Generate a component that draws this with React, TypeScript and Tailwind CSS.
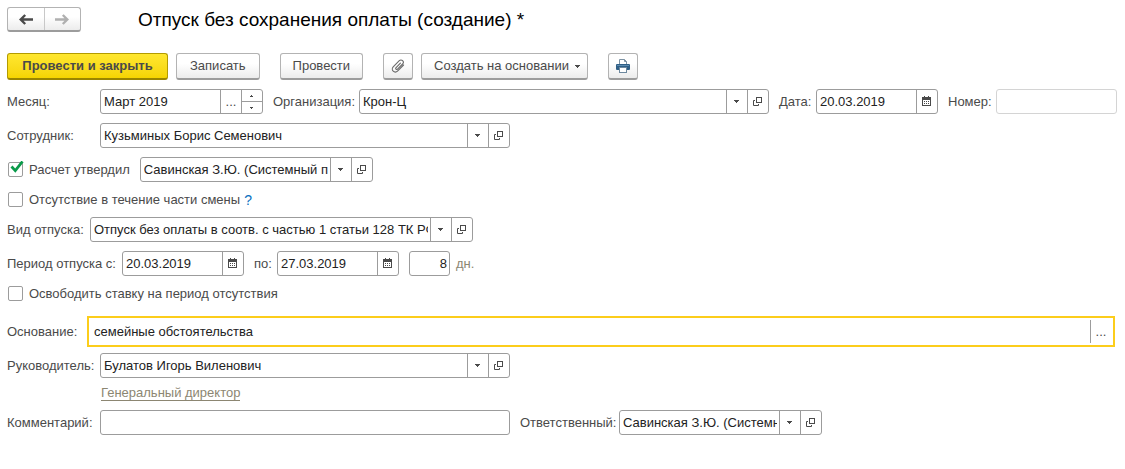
import { useState, type ReactNode } from "react";
import clsx from "clsx";

const OpenIcon = () => (
    <svg width="10" height="9" viewBox="0 0 10 9" fill="none" stroke="#4a4a4a" aria-hidden="true">
        <rect x="3.5" y="0.5" width="5" height="5" />
        <path d="M2 3.5H0.5V8.5H5.5V7" />
    </svg>
)

const CalendarIcon = () => (
    <svg width="10" height="11" viewBox="0 0 10 11" fill="#4a4a4a" shapeRendering="crispEdges" aria-hidden="true">
        <path d="M2 0h1v1h3V0h1v1h2v9H0V1h2zM1 4v5h7V4z" fillRule="evenodd" />
        <path d="M2 5h1v1H2zM4 5h1v1H4zM6 5h1v1H6zM2 7h1v1H2zM4 7h1v1H4zM6 7h1v1H6z" />
    </svg>
)

const CaretIcon = () => (
    <svg width="6" height="3" viewBox="0 0 6 3" fill="#4a4a4a" shapeRendering="crispEdges" aria-hidden="true">
        <path d="M0 0h5v1H4v1H3v1H2V2H1V1H0z" />
    </svg>
)

const ArrowIcon = ({ className }: { className: string }) => (
    <svg width="14" height="11" viewBox="0 0 14 11" fill="none" stroke="currentColor" strokeWidth="2.4" className={className} aria-hidden="true">
        <path d="M14 5.5H2M6.2 1L1.7 5.5L6.2 10" />
    </svg>
)

const ClipIcon = () => (
    <svg width="14" height="14" viewBox="0 0 14 14" fill="none" stroke="#6a6a6a" strokeWidth="1.1" strokeLinecap="round" aria-hidden="true">
        <path d="M9.4 4.2L4.9 8.9a1 1 0 0 0 1.4 1.4L11.6 5a2.3 2.3 0 0 0-3.3-3.3L2.2 7.9a3 3 0 0 0 4.3 4.3L12.6 6" />
    </svg>
)

const PrinterIcon = () => (
    <svg width="14" height="14" viewBox="0 0 14 14" aria-hidden="true">
        <path d="M3.5 5V0.5h5l2 2V5" fill="#fff" stroke="#7d92a3" />
        <path d="M8.5 0.5v2h2" fill="none" stroke="#7d92a3" />
        <rect x="0" y="5" width="14" height="6" rx="1" fill="#2f5f86" />
        <rect x="1" y="6" width="12" height="1" fill="#5d8bb0" />
        <rect x="3.5" y="8.5" width="7" height="5" fill="#fff" stroke="#6d889e" />
    </svg>
)

interface ToolButtonProps {
    children: ReactNode;
    className?: string;
    label?: string;
}

const ToolButton = ({ children, className, label }: ToolButtonProps) => (
    <button
        type="button"
        aria-label={label}
        className={clsx(
            "flex h-[27px] shrink-0 items-center justify-center rounded-[3px] border border-b-2 whitespace-nowrap",
            className ?? "border-[#b3b3b3] border-b-[#9c9c9c] bg-linear-to-b from-white from-40% to-[#ececec]"
        )}
    >
        {children}
    </button>
)

interface FieldProps {
    id: string;
    label: string;
    value?: string;
    labelWidth?: string;
    width: string;
    buttons?: ("caret" | "open" | "calendar" | "more" | "spin")[];
    disabled?: boolean;
    right?: boolean;
    hideLabel?: boolean;
}

const names = { caret: "Выбрать", open: "Открыть", calendar: "Календарь", more: "Выбрать из списка" };

const Field = ({ id, label, value = "", labelWidth, width, buttons = [], disabled, right, hideLabel }: FieldProps) => {
    const [text, setText] = useState(value);

    return (
        <div className={clsx("flex items-center", width === "flex-1" && "min-w-0 flex-1")}>
            {!hideLabel && (
                <label htmlFor={id} className={clsx("shrink-0 whitespace-nowrap", labelWidth)}>{label}</label>
            )}
            <div className={clsx("flex h-[25px] min-w-0 rounded-[3px] border bg-white", width, disabled ? "border-[#d4d4d4]" : "border-[#9c9c9c]")}>
                <input
                    id={id}
                    aria-label={hideLabel ? label : undefined}
                    value={text}
                    disabled={disabled}
                    onChange={(e) => setText(e.target.value)}
                    className={clsx("w-0 min-w-0 flex-1 pr-0.5 pl-[3px] text-[#222] outline-none", right && "text-right")}
                />
                {buttons.map((b) => b === "spin" ? (
                    <div key={b} className="flex w-[21px] shrink-0 flex-col border-l border-[#9c9c9c]">
                        <button type="button" aria-label="Больше" className="flex flex-1 items-center justify-center border-b border-[#9c9c9c]">
                            <svg width="4" height="2" viewBox="0 0 4 2" fill="#4a4a4a" shapeRendering="crispEdges"><path d="M1 0h1v1h1v1H0V1h1z" /></svg>
                        </button>
                        <button type="button" aria-label="Меньше" className="flex flex-1 items-center justify-center">
                            <svg width="4" height="2" viewBox="0 0 4 2" fill="#4a4a4a" shapeRendering="crispEdges"><path d="M0 0h3v1H2v1H1V1H0z" /></svg>
                        </button>
                    </div>
                ) : (
                    <button key={b} type="button" aria-label={names[b]} className="flex w-[21px] shrink-0 items-center justify-center border-l border-[#9c9c9c]">
                        {b === "caret" && <CaretIcon />}
                        {b === "open" && <OpenIcon />}
                        {b === "calendar" && <CalendarIcon />}
                        {b === "more" && "..."}
                    </button>
                ))}
            </div>
        </div>
    )
}

const Check = ({ id, label, initial = false }: { id: string; label: string; initial?: boolean }) => {
    const [on, setOn] = useState(initial);

    return (
        <div className="flex items-center pl-px">
            <span className="relative flex">
                <input
                    id={id}
                    type="checkbox"
                    checked={on}
                    onChange={() => setOn(!on)}
                    className="size-[15px] appearance-none rounded-[2px] border border-[#9c9c9c] bg-white"
                />
                {on && (
                    <svg width="15" height="14" viewBox="0 0 15 14" fill="none" stroke="#0a9a4a" strokeWidth="2.8" className="pointer-events-none absolute -top-px left-0.5" aria-hidden="true">
                        <path d="M1.5 5.5L5.3 9.6L12.5 0.5" />
                    </svg>
                )}
            </span>
            <label htmlFor={id} className="pl-1.5 whitespace-nowrap">{label}</label>
        </div>
    )
}

const App = () => {
    const [reason, setReason] = useState("семейные обстоятельства");

    return (
        <main className="bg-white py-[7px] pr-2 pl-[7px] font-['Liberation_Sans',Arial,sans-serif] text-[13px] leading-4 text-[#4a4a4a]">
            <header className="flex items-center gap-[57px]">
                <div className="flex h-[25px] w-[74px] rounded-[3px] border border-b-2 border-[#b3b3b3] border-b-[#9c9c9c] bg-linear-to-b from-white from-40% to-[#ececec]">
                    <button type="button" aria-label="Назад" className="flex flex-1 items-center justify-center border-r border-[#c8c8c8]">
                        <ArrowIcon className="text-[#4a4a4a]" />
                    </button>
                    <button type="button" aria-label="Вперед" className="flex flex-1 items-center justify-center">
                        <ArrowIcon className="rotate-180 text-[#b0b0b0]" />
                    </button>
                </div>
                <h1 className="text-[19px] leading-6 text-black">Отпуск без сохранения оплаты (создание) *</h1>
            </header>

            <div className="mt-[21px] flex gap-5">
                <div className="flex gap-2">
                    <ToolButton className="w-[161px] border-[#b39b00] border-b-[#9a8500] bg-linear-to-b from-[#ffe72e] to-[#f5d400] font-bold">Провести и закрыть</ToolButton>
                    <ToolButton><span className="px-[13px]">Записать</span></ToolButton>
                </div>
                <ToolButton><span className="px-3">Провести</span></ToolButton>
                <div className="flex gap-2">
                    <ToolButton label="Присоединенные файлы"><span className="px-[7px]"><ClipIcon /></span></ToolButton>
                    <ToolButton><span className="flex items-center gap-1.5 pr-1.5 pl-3">Создать на основании <CaretIcon /></span></ToolButton>
                </div>
                <ToolButton label="Печать"><span className="px-[7px]"><PrinterIcon /></span></ToolButton>
            </div>

            <div className="mt-[9px] flex flex-col gap-[9px]">
                <div className="flex gap-2.5">
                    <Field id="month" label="Месяц:" value="Март 2019" labelWidth="w-[93px]" width="w-[163px]" buttons={["more", "spin"]} />
                    <Field id="org" label="Организация:" value="Крон-Ц" labelWidth="w-[86px]" width="flex-1" buttons={["caret", "open"]} />
                    <Field id="date" label="Дата:" value="20.03.2019" labelWidth="w-[37px]" width="w-[122px]" buttons={["calendar"]} />
                    <Field id="number" label="Номер:" labelWidth="w-12" width="w-[121px]" disabled />
                </div>
                <Field id="employee" label="Сотрудник:" value="Кузьминых Борис Семенович" labelWidth="w-[93px]" width="w-[410px]" buttons={["caret", "open"]} />
                <div className="flex gap-2.5">
                    <Check id="approved" label="Расчет утвердил" initial />
                    <Field id="approver" label="Расчет утвердил" hideLabel value="Савинская З.Ю. (Системный программист)" width="w-[233px]" buttons={["caret", "open"]} />
                </div>
                <div className="flex h-[17px] items-center gap-1">
                    <Check id="partial" label="Отсутствие в течение части смены" />
                    <button type="button" className="text-sm text-[#0a70c0]">?</button>
                </div>
                <Field id="kind" label="Вид отпуска:" value="Отпуск без оплаты в соотв. с частью 1 статьи 128 ТК РФ" labelWidth="w-[83px]" width="w-[383px]" buttons={["caret", "open"]} />
                <div className="flex items-center gap-2.5">
                    <Field id="from" label="Период отпуска с:" value="20.03.2019" labelWidth="w-[115px]" width="w-[122px]" buttons={["calendar"]} />
                    <Field id="to" label="по:" value="27.03.2019" labelWidth="w-[23px]" width="w-[122px]" buttons={["calendar"]} />
                    <div className="flex items-center gap-1.5">
                        <Field id="days" label="Дней" hideLabel value="8" width="w-[41px]" right />
                        <span className="text-[#8c8672]">дн.</span>
                    </div>
                </div>
                <div className="flex h-[17px] items-center">
                    <Check id="release" label="Освободить ставку на период отсутствия" />
                </div>
            </div>

            <div className="mt-3.5 flex items-center pr-0.5">
                <label htmlFor="reason" className="w-20 shrink-0">Основание:</label>
                <div className="flex h-[31px] min-w-0 flex-1 items-center border-2 border-[#fccd1b] pr-0.5">
                    <input
                        id="reason"
                        value={reason}
                        onChange={(e) => setReason(e.target.value)}
                        className="min-w-0 flex-1 pl-[5px] text-[#222] outline-none"
                    />
                    <button type="button" aria-label="Выбрать основание" className="h-[23px] w-[21px] shrink-0 border-l border-[#9c9c9c]">...</button>
                </div>
            </div>

            <div className="mt-1.5 flex flex-col gap-[9px]">
                <Field id="manager" label="Руководитель:" value="Булатов Игорь Виленович" labelWidth="w-[93px]" width="w-[410px]" buttons={["caret", "open"]} />
                <a href="#" className="ml-[94px] h-3.5 self-start border-b border-[#8c8672] leading-3 text-[#8c8672]">Генеральный директор</a>
                <div className="flex gap-2.5">
                    <Field id="comment" label="Комментарий:" labelWidth="w-[93px]" width="w-[410px]" />
                    <Field id="responsible" label="Ответственный:" value="Савинская З.Ю. (Системный программист)" labelWidth="w-[99px]" width="w-[203px]" buttons={["caret", "open"]} />
                </div>
            </div>
        </main>
    )
}

export default App
